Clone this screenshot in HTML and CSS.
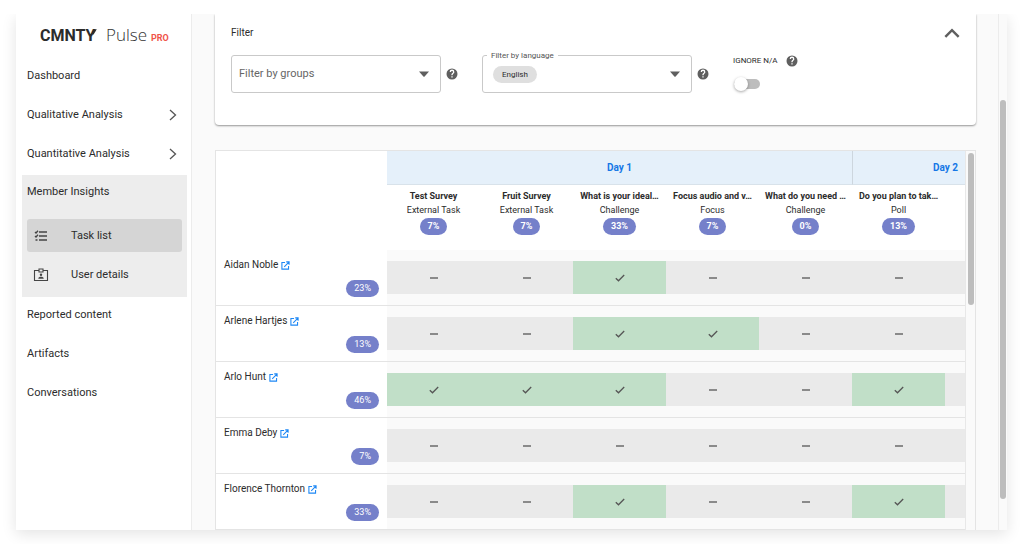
FILE: index.html
```html
<!DOCTYPE html>
<html lang="en">
<head>
<meta charset="utf-8">
<title>CMNTY Pulse - Task list</title>
<link rel="stylesheet" href="styles.css">
</head>
<body>
<svg class="defs" aria-hidden="true">
  <symbol id="help" viewBox="0 0 24 24"><path fill="currentColor" d="M12 1a11 11 0 1 0 0 22 11 11 0 0 0 0-22zm1.300 18h-2.600v-2.500h2.600zm2.400-8.700-1.100 1.100c-.9.900-1.300 1.500-1.300 3.200h-2.600v-.7c0-1.300.5-2.300 1.400-3.200l1.400-1.400c.4-.4.6-.9.600-1.400a2.100 2.100 0 0 0-4.200 0H7.300a4.700 4.700 0 0 1 9.400 0c0 .9-.4 1.800-1 2.400z"/></symbol>
  <symbol id="open" viewBox="0 0 10 10"><path fill="none" stroke="currentColor" stroke-width="1.200" d="M4.500 1.600H1v7.400h7.400V5.500M5.800 1H9v3.200M9 1 3.600 6.400"/></symbol>
  <symbol id="tick" viewBox="0 0 10 8"><path fill="none" stroke="currentColor" stroke-width="1.300" d="M.8 4.200 3.500 6.800 9.200 1"/></symbol>
  <symbol id="dash" viewBox="0 0 10 8"><path stroke="currentColor" stroke-width="1.300" d="M1 4h8"/></symbol>
  <symbol id="caret" viewBox="0 0 10 6"><path fill="currentColor" d="M0 .5h10L5.600 5.400q-.6.600-1.200 0z"/></symbol>
  <symbol id="next" viewBox="0 0 8 12"><path fill="none" stroke="currentColor" stroke-width="1.300" d="M1 1l5.500 5L1 11"/></symbol>
</svg>
<div class="app">
  <aside class="sidebar">
    <div class="logo"><span class="brand">CMNTY<svg class="flick" viewBox="0 0 6 6"><path fill="currentColor" d="M0 5.500 3 .3h2.800L2.600 5.500z"/></svg></span><span class="product">Pulse</span><span class="tier">PRO</span></div>
    <nav class="nav">
      <a class="item" href="#">Dashboard</a>
      <a class="item" href="#">Qualitative Analysis<svg class="next"><use href="#next"/></svg></a>
      <a class="item" href="#">Quantitative Analysis<svg class="next"><use href="#next"/></svg></a>
      <div class="group">
        <a class="group-title" href="#">Member Insights</a>
        <a class="sub current" href="#"><svg class="sub-icon" viewBox="0 0 16 14"><path fill="none" stroke="currentColor" stroke-width="1.300" d="M6 3h8M6 7h8M6 11h8M2 3l1 1 2-2.200M2 7l1 1 2-2.200M2.500 11H4.500"/></svg>Task list</a>
        <a class="sub" href="#"><svg class="sub-icon" viewBox="0 0 16 14"><path fill="none" stroke="currentColor" stroke-width="1.100" d="M6 2.500H1.500v10h13v-10H10M6 1h4v3H6z"/><circle cx="8" cy="6.800" r="1.200" fill="currentColor"/><path fill="currentColor" d="M5.300 10.800c0-1.500 1.200-2 2.700-2s2.700.5 2.700 2z"/></svg>User details</a>
      </div>
      <a class="item" href="#">Reported content</a>
      <a class="item" href="#">Artifacts</a>
      <a class="item" href="#">Conversations</a>
    </nav>
  </aside>
  <main class="main">
    <section class="filter">
      <header class="filter-head">
        <h2 class="filter-title">Filter</h2>
        <button class="icon-button" aria-label="Collapse filter"><svg class="collapse" viewBox="0 0 14 9"><path fill="none" stroke="currentColor" stroke-width="2.200" d="M1 8l6-6 6 6"/></svg></button>
      </header>
      <div class="filter-row">
        <div class="field">
          <select class="groups" aria-label="Filter by groups"><option>Filter by groups</option></select>
          <svg class="caret"><use href="#caret"/></svg>
        </div>
        <button class="icon-button help-after" aria-label="Help: groups"><svg class="help"><use href="#help"/></svg></button>
        <div class="field">
          <label class="field-label" for="language">Filter by language</label>
          <select class="chip" id="language"><option>English</option></select>
          <svg class="caret"><use href="#caret"/></svg>
        </div>
        <button class="icon-button help-after" aria-label="Help: language"><svg class="help"><use href="#help"/></svg></button>
        <div class="ignore">
          <div class="ignore-head"><label for="ignore">IGNORE N/A</label><button class="icon-button" aria-label="Help: ignore N/A"><svg class="help"><use href="#help"/></svg></button></div>
          <input class="switch" id="ignore" type="checkbox" role="switch">
        </div>
      </div>
    </section>
    <section class="board">
      <div class="board-view">
        <table class="tasks">
          <colgroup><col class="col-name"><col class="col-task" span="7"></colgroup>
          <thead>
            <tr><td class="corner" rowspan="2"></td><th class="day" colspan="5">Day 1</th><th class="day" colspan="2">Day 2</th></tr>
            <tr>
              <th class="task">Test Survey<span class="kind">External Task</span><span class="pill">7%</span></th>
              <th class="task">Fruit Survey<span class="kind">External Task</span><span class="pill">7%</span></th>
              <th class="task">What is your ideal…<span class="kind">Challenge</span><span class="pill">33%</span></th>
              <th class="task">Focus audio and v…<span class="kind">Focus</span><span class="pill">7%</span></th>
              <th class="task">What do you need …<span class="kind">Challenge</span><span class="pill">0%</span></th>
              <th class="task">Do you plan to tak…<span class="kind">Poll</span><span class="pill">13%</span></th>
              <td class="task"></td>
            </tr>
          </thead>
          <tbody id="members"></tbody>
        </table>
      </div>
      <div class="board-scroll"><div class="board-thumb"></div></div>
    </section>
  </main>
  <div class="page-scroll"><div class="page-thumb"></div></div>
</div>
<script src="members.js"></script>
</body>
</html>
```
FILE: styles.css
```css
* { box-sizing: border-box; }
body { margin: 0; padding: 14px 17px 14px 16px; height: 100vh; background: #fff; color: #2c2c2c; font: 11px/14px Roboto, sans-serif; overflow: hidden; }
a { color: inherit; text-decoration: none; }
svg { display: block; flex: none; }
.defs { position: absolute; width: 0; height: 0; }
.app { display: flex; height: 100%; box-shadow: 0 4px 14px rgba(0,0,0,.11); clip-path: inset(0 -20px -20px -20px); }

.sidebar { flex: none; width: 176px; background: #fff; border-right: 1px solid #ececec; }
.logo { display: flex; align-items: baseline; height: 42px; padding: 9px 0 0 24px; line-height: 24px; }
.brand { position: relative; width: 66px; font-size: 16px; font-weight: 700; }
.flick { position: absolute; top: 5px; left: 51px; width: 6px; height: 6px; }
.product { width: 45px; font: 300 17px/24px "Open Sans", sans-serif; color: #333; }
.tier { font-size: 9px; font-weight: 700; color: #f0544a; }
.nav { display: flex; flex-direction: column; }
.item { display: flex; align-items: center; justify-content: space-between; height: 39px; padding: 0 14px 0 11px; }
.next { width: 8px; height: 12px; color: #555; }
.group { margin: 2px 4px -2px 6px; padding: 0 5px 6px; height: 122px; background: #ededed; }
.group-title { display: flex; align-items: center; height: 33px; margin-bottom: 11px; }
.sub { display: flex; align-items: center; gap: 22px; height: 33px; margin-bottom: 6px; padding-left: 6px; border-radius: 3px; }
.current { background: #d5d5d5; }
.sub-icon { width: 16px; height: 14px; color: #444; }

.main { flex: 1; min-width: 0; display: flex; flex-direction: column; gap: 25px; padding: 0 22px 0 23px; background: #fafafa; overflow: hidden; }
.filter { flex: none; height: 111px; padding: 10px 16px 0; background: #fff; border-radius: 0 0 4px 4px; box-shadow: 0 1px 2px rgba(0,0,0,.4); }
.filter-head { display: flex; align-items: center; justify-content: space-between; height: 18px; margin-bottom: 13px; }
.filter-title { margin: 0; font-size: 10px; font-weight: 400; }
.icon-button { display: block; padding: 0; border: 0; background: none; color: #5f5f5f; }
.collapse { width: 16px; height: 10px; }
.filter-row { display: flex; align-items: flex-start; }
.field { position: relative; display: flex; align-items: center; flex: 0 1 210px; height: 38px; border: 1px solid #c9c9c9; border-radius: 3px; }
.groups { appearance: none; width: 100%; height: 100%; padding: 0 7px; border: 0; background: none; color: #666; font: 11px/14px Roboto, sans-serif; }
.caret { position: absolute; right: 11px; width: 10px; height: 6px; color: #5f5f5f; pointer-events: none; }
.field-label { position: absolute; top: -7px; left: 4px; padding: 0 4px; background: #fff; font-size: 8px; color: #555; }
.chip { appearance: none; height: 17px; margin-left: 10px; padding: 0 9px; border: 0; border-radius: 9px; background: #dfdfdf; color: #2c2c2c; font: 8px/17px Roboto, sans-serif; }
.help { width: 12px; height: 12px; }
.help-after { margin: 13px 24px 0 5px; }
.ignore { display: flex; flex-direction: column; gap: 10px; }
.ignore-head { display: flex; align-items: center; gap: 8px; height: 12px; font-size: 8px; white-space: nowrap; }
.switch { appearance: none; position: relative; width: 26px; height: 10px; margin: 2px 1px; border-radius: 5px; background: #bdbdbd; }
.switch::before { content: ""; position: absolute; top: -2px; left: 0; width: 14px; height: 14px; border-radius: 50%; background: #fff; box-shadow: 0 1px 3px rgba(0,0,0,.35); }
.switch:checked::before { left: 12px; }

.board { flex: 1; min-height: 0; display: flex; border: 1px solid #e4e4e4; border-bottom: 0; }
.board-view { flex: 1; overflow: hidden; }
.tasks { width: 822px; table-layout: fixed; border-collapse: separate; border-spacing: 0; }
.tasks td, .tasks th { padding: 0; }
.col-name { width: 171px; }
.col-task { width: 93px; }
.corner { background: #fff; }
.tasks .day { height: 34px; border-bottom: 1px solid #d8e2ea; background: #e5f0fa; color: #1577e6; font-size: 10px; font-weight: 700; }
.day + .day { border-left: 1px solid #cdd6de; }
.tasks .task { height: 65px; padding: 4px 0 0; vertical-align: top; background: #fff; font-size: 9px; line-height: 14px; font-weight: 700; white-space: nowrap; }
.kind { display: block; margin-bottom: 1px; font-weight: 400; }
.pill { display: inline-block; height: 17px; padding: 0 8px; border-radius: 9px; background: #7580ca; color: #fff; font-size: 9px; line-height: 17px; vertical-align: top; }
.tasks .member { height: 56px; padding: 8px; background: #fff; border-bottom: 1px solid #e4e4e4; text-align: right; font-size: 9px; font-weight: 400; vertical-align: top; }
.member .name { display: flex; align-items: center; gap: 3px; margin-bottom: 8px; font-size: 10px; line-height: 14px; }
.open { width: 9px; height: 9px; color: #1e88f5; }
.tasks .cell { height: 56px; border-bottom: 1px solid #e4e4e4; }
.mark { display: flex; align-items: center; justify-content: center; height: 33px; background: #eaeaea; color: #555; }
.done { background: #c1dfc8; }
.mark-icon { width: 10px; height: 8px; }
.board-scroll { flex: none; width: 10px; padding: 2px 1px 0 2px; border-left: 1px solid #e8e8e8; }
.board-thumb { height: 152px; border-radius: 3px; background: #bdbdbd; }
.page-scroll { flex: none; width: 9px; height: 100%; padding: 86px 1px 31px; border-left: 1px solid #ececec; background: #fafafa; }
.page-thumb { height: 100%; border-radius: 3px; background: #bdbdbd; }
```
FILE: members.js
```js
const members = [
  { name: "Aidan Noble", rate: "23%", done: [2] },
  { name: "Arlene Hartjes", rate: "13%", done: [2, 3] },
  { name: "Arlo Hunt", rate: "46%", done: [0, 1, 2, 5] },
  { name: "Emma Deby", rate: "7%", done: [] },
  { name: "Florence Thornton", rate: "33%", done: [2, 5] }
];

function mark(index, done) {
  const complete = done.includes(index);
  const icon = complete ? "tick" : "dash";
  return `<td class="cell"><div class="mark${complete ? " done" : ""}"><svg class="mark-icon"><use href="#${icon}"/></svg></div></td>`;
}

document.getElementById("members").innerHTML = members.map(member => `<tr>
  <th class="member"><a class="name" href="#">${member.name}<svg class="open"><use href="#open"/></svg></a><span class="pill">${member.rate}</span></th>
  ${[0, 1, 2, 3, 4, 5, 6].map(index => mark(index, member.done)).join("")}
</tr>`).join("");
```
